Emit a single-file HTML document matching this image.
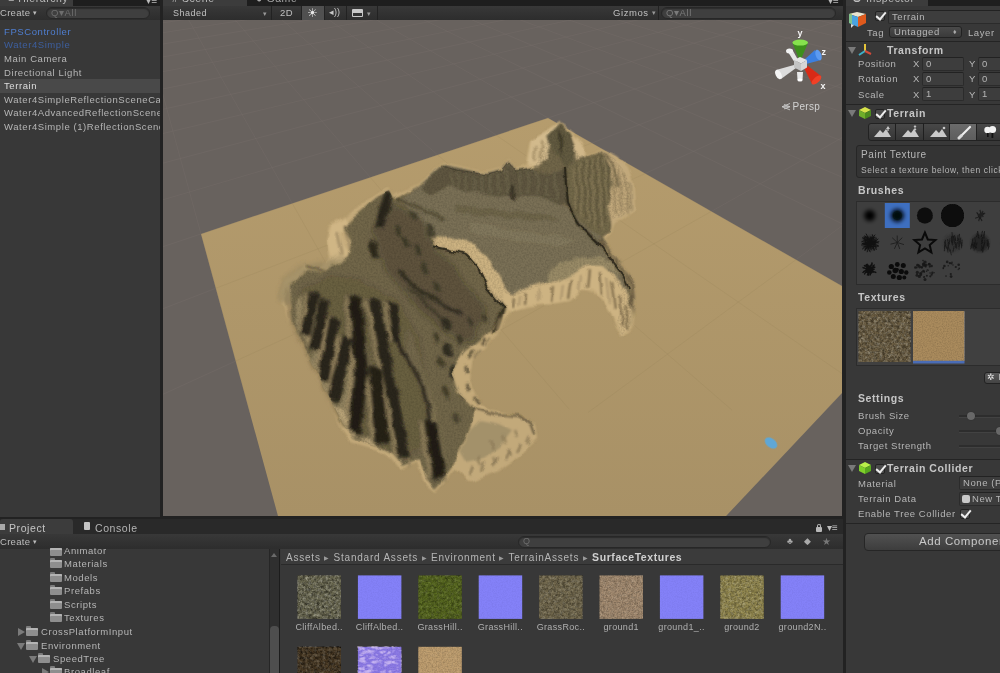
<!DOCTYPE html>
<html><head><meta charset="utf-8"><title>Unity</title>
<style>
*{box-sizing:border-box;margin:0;padding:0}
html,body{width:1000px;height:673px;overflow:hidden;background:#222}
body{position:relative;will-change:transform;filter:blur(.35px);font-family:"Liberation Sans",sans-serif;font-size:9.5px;color:#b6b6b6;letter-spacing:.58px;line-height:13px}
.abs{position:absolute}
.t{position:absolute;white-space:nowrap;line-height:13px}
.b{font-weight:bold;color:#c6c6c6;font-size:10.5px;letter-spacing:.58px}
.panel{position:absolute;background:#383838;overflow:hidden}
.tb{position:absolute;background:linear-gradient(#383838,#2d2d2d);}
.tab{position:absolute;background:#3c3c3c;border-radius:3px 3px 0 0}
.fld{position:absolute;background:#3d3d3d;border:1px solid #2b2b2b;border-top-color:#222;border-radius:2px;color:#b6b6b6;padding-left:3px;line-height:12px;overflow:hidden;white-space:nowrap}
.sep{position:absolute;height:1px;background:#242424;left:0;right:0}
.srch{position:absolute;background:#3f3f3f;border:1px solid #272727;border-radius:7px;box-shadow:inset 0 1px 1px #2c2c2c}
.chk{position:absolute;width:10px;height:10px;background:#4a4a4a;border:1px solid #222;border-radius:2px}
.chk:after{content:"";position:absolute;left:2px;top:-2px;width:4px;height:8px;border:solid #eee;border-width:0 2px 2px 0;transform:rotate(40deg)}
.fold{position:absolute;width:0;height:0;border-left:4px solid transparent;border-right:4px solid transparent;border-top:7px solid #7a7a7a}
.foldr{position:absolute;width:0;height:0;border-top:4px solid transparent;border-bottom:4px solid transparent;border-left:7px solid #7a7a7a}
.fi{position:absolute;width:12px;height:8px;background:#8e8e8e;border-radius:1px;box-shadow:inset 0 2px 0 #b4b4b4}
.fi:before{content:"";position:absolute;left:0;top:-2px;width:5px;height:2px;background:#7c7c7c;border-radius:1px 1px 0 0}
.th{position:absolute;width:44px;height:44px}
.lbl{position:absolute;width:60px;text-align:center;font-size:9px;letter-spacing:.35px;color:#b0b0b0;white-space:nowrap}
</style></head><body>
<!-- HIERARCHY -->
<div class="panel" style="left:0;top:0;width:160px;height:517px">
  <div class="abs" style="left:0;top:0;width:160px;height:6px;background:#1e1e1e"></div>
  <div class="tab" style="left:0;top:-10px;width:73px;height:16px"></div>
  <div class="t" style="left:8px;top:-8.5px;font-size:10.5px;color:#bdbdbd">≡ Hierarchy</div>
  <div class="t" style="left:146px;top:-6px;font-size:10px;color:#bbb">▾≡</div>
  <div class="tb" style="left:0;top:6px;width:160px;height:14px"></div>
  <div class="t" style="left:0;top:6px;font-size:9.5px;letter-spacing:.3px;color:#bdbdbd">Create <span style="font-size:7px;position:relative;top:-1px">▾</span></div>
  <div class="srch" style="left:46px;top:7px;width:104px;height:12px"></div>
  <div class="t" style="left:51px;top:6px;font-size:9.5px;color:#6e6e6e">Q▾All</div>
  <div class="abs" style="left:0;top:79px;width:160px;height:14px;background:#494949"></div>
  <div class="t" style="left:4px;top:25px;color:#4f7ed0">FPSController</div>
  <div class="t" style="left:4px;top:38px;color:#3d5f9f">Water4Simple</div>
  <div class="t" style="left:4px;top:52px">Main Camera</div>
  <div class="t" style="left:4px;top:66px">Directional Light</div>
  <div class="t" style="left:4px;top:79px;color:#dedede">Terrain</div>
  <div class="t" style="left:4px;top:93px">Water4SimpleReflectionSceneCamera</div>
  <div class="t" style="left:4px;top:106px">Water4AdvancedReflectionSceneCamera</div>
  <div class="t" style="left:4px;top:120px">Water4Simple (1)ReflectionSceneCamera</div>
</div>
<!-- SCENE -->
<div class="abs" style="left:163px;top:0;width:680px;height:6px;background:#1e1e1e"></div>
<div class="tab" style="left:163px;top:-10px;width:84px;height:16px"></div>
<div class="t" style="left:172px;top:-8.5px;font-size:10.5px;color:#bdbdbd"># Scene</div>
<div class="t" style="left:256px;top:-8.5px;font-size:10.5px;color:#a8a8a8">● Game</div>
<div class="tb" style="left:163px;top:6px;width:680px;height:14px"></div>
<div class="t" style="left:173px;top:6.5px;font-size:9px;letter-spacing:.5px;color:#c0c0c0">Shaded</div>
<div class="t" style="left:263px;top:7px;font-size:7px;color:#999">▾</div>
<div class="abs" style="left:271px;top:6px;width:1px;height:14px;background:#222"></div>
<div class="t" style="left:280px;top:6px;font-size:9.5px;color:#c0c0c0">2D</div>
<div class="abs" style="left:301px;top:6px;width:1px;height:14px;background:#222"></div>
<div class="abs" style="left:302px;top:6px;width:22px;height:14px;background:#505050"></div>
<div class="t" style="left:307px;top:6.5px;font-size:12px;color:#e8e8e8;letter-spacing:0">☀</div>
<div class="abs" style="left:324px;top:6px;width:1px;height:14px;background:#222"></div>
<div class="t" style="left:329px;top:6px;font-size:9px;color:#c8c8c8;letter-spacing:0">◂))</div>
<div class="abs" style="left:346px;top:6px;width:1px;height:14px;background:#222"></div>
<div class="abs" style="left:352px;top:9px;width:11px;height:8px;background:#c8c8c8;border-radius:1px"></div><div class="abs" style="left:353px;top:13px;width:9px;height:3px;background:#333"></div>
<div class="t" style="left:367px;top:7px;font-size:7px;color:#999">▾</div>
<div class="abs" style="left:377px;top:6px;width:1px;height:14px;background:#222"></div>
<div class="t" style="left:613px;top:6px;font-size:9.5px;color:#c0c0c0">Gizmos <span style="font-size:7px;position:relative;top:-1px;color:#999">▾</span></div>
<div class="abs" style="left:658px;top:6px;width:1px;height:14px;background:#222"></div>
<div class="srch" style="left:661px;top:7px;width:175px;height:12px"></div>
<div class="t" style="left:666px;top:6px;font-size:9.5px;color:#7a7a7a">Q▾All</div><div class="t" style="left:828px;top:-6px;font-size:10px;color:#bbb;letter-spacing:0">▾≡</div>
<svg class="abs" style="left:163px;top:20px" width="679" height="496" viewBox="163 20 679 496">
<rect x="163" y="20" width="679" height="496" fill="#68625e"/>
<path d="M100.5 -38.0L121.9 -40.0M100.6 -34.5L159.2 -40.0M100.6 -30.7L196.8 -40.0M100.7 -26.6L234.8 -40.0M100.7 -22.1L273.0 -40.0M100.8 -17.3L311.6 -40.0M100.8 -12.1L350.5 -40.0M100.9 -6.5L389.7 -40.0M101.0 -0.3L429.3 -40.0M101.1 6.6L469.2 -40.0M101.2 14.1L509.4 -40.0M101.3 22.5L550.0 -40.0M101.4 31.8L591.0 -40.0M101.5 42.2L632.3 -40.0M101.7 54.1L673.1 -39.9M101.8 67.6L715.2 -39.9M102.0 83.1L757.6 -39.9M102.2 101.2L800.4 -39.9M102.5 122.5L843.6 -39.9M102.8 147.9L887.2 -39.9M103.2 178.9L899.5 -31.5M103.6 217.3L899.4 -17.4M126.2 -39.9L249.8 412.7M104.2 266.3L899.3 0.6M154.9 -39.9L411.0 413.6M105.0 331.1L899.2 24.3M183.8 -40.0L569.2 409.2M114.1 416.7L899.1 57.2M213.0 -39.9L731.9 410.0M354.2 412.8L898.8 105.7M242.1 -40.0L888.6 405.7M588.2 412.4L898.4 184.4M271.8 -39.9L894.8 316.2M827.5 408.4L897.7 334.0M301.3 -39.9L899.3 251.7M331.0 -40.0L898.0 200.9M361.3 -39.9L896.9 161.5M391.4 -39.9L899.9 131.5M422.1 -39.8L898.8 105.7M452.6 -39.9L897.9 84.3M483.1 -40.0L897.2 66.2M514.6 -39.9L899.3 51.4M545.6 -39.9L898.6 38.0M577.5 -39.8L897.9 26.2M608.9 -39.9L899.6 16.3M640.4 -40.0L899.0 7.1M673.1 -39.9L898.4 -1.2M705.0 -39.9L899.8 -8.3M738.2 -39.8L899.3 -15.0M770.5 -39.9L898.8 -21.1M803.0 -40.0L900.0 -26.4M837.0 -39.9L899.5 -31.5M869.9 -39.9L899.1 -36.2" stroke="#7a726e" stroke-width="1" fill="none" opacity=".3"/>
<defs><linearGradient id="sg" gradientUnits="userSpaceOnUse" x1="0" y1="118" x2="0" y2="516"><stop offset="0" stop-color="#b59c6d"/><stop offset="1" stop-color="#a89166"/></linearGradient></defs><polygon points="548,118 907.6,323.5 378.6,884.4 201,234" fill="url(#sg)"/><clipPath id="sandclip"><polygon points="548,118 907.6,323.5 378.6,884.4 201,234"/></clipPath><path d="M100.5 -38.0L121.9 -40.0M100.6 -34.5L159.2 -40.0M100.6 -30.7L196.8 -40.0M100.7 -26.6L234.8 -40.0M100.7 -22.1L273.0 -40.0M100.8 -17.3L311.6 -40.0M100.8 -12.1L350.5 -40.0M100.9 -6.5L389.7 -40.0M101.0 -0.3L429.3 -40.0M101.1 6.6L469.2 -40.0M101.2 14.1L509.4 -40.0M101.3 22.5L550.0 -40.0M101.4 31.8L591.0 -40.0M101.5 42.2L632.3 -40.0M101.7 54.1L673.1 -39.9M101.8 67.6L715.2 -39.9M102.0 83.1L757.6 -39.9M102.2 101.2L800.4 -39.9M102.5 122.5L843.6 -39.9M102.8 147.9L887.2 -39.9M103.2 178.9L899.5 -31.5M103.6 217.3L899.4 -17.4M126.2 -39.9L249.8 412.7M104.2 266.3L899.3 0.6M154.9 -39.9L411.0 413.6M105.0 331.1L899.2 24.3M183.8 -40.0L569.2 409.2M114.1 416.7L899.1 57.2M213.0 -39.9L731.9 410.0M354.2 412.8L898.8 105.7M242.1 -40.0L888.6 405.7M588.2 412.4L898.4 184.4M271.8 -39.9L894.8 316.2M827.5 408.4L897.7 334.0M301.3 -39.9L899.3 251.7M331.0 -40.0L898.0 200.9M361.3 -39.9L896.9 161.5M391.4 -39.9L899.9 131.5M422.1 -39.8L898.8 105.7M452.6 -39.9L897.9 84.3M483.1 -40.0L897.2 66.2M514.6 -39.9L899.3 51.4M545.6 -39.9L898.6 38.0M577.5 -39.8L897.9 26.2M608.9 -39.9L899.6 16.3M640.4 -40.0L899.0 7.1M673.1 -39.9L898.4 -1.2M705.0 -39.9L899.8 -8.3M738.2 -39.8L899.3 -15.0M770.5 -39.9L898.8 -21.1M803.0 -40.0L900.0 -26.4M837.0 -39.9L899.5 -31.5M869.9 -39.9L899.1 -36.2" stroke="#8f7b55" stroke-width="1" fill="none" opacity=".17" clip-path="url(#sandclip)"/>
<defs>
<filter id="soft" x="-5%" y="-5%" width="110%" height="110%"><feGaussianBlur stdDeviation="1.1"/></filter>
<filter id="soft15" x="-5%" y="-5%" width="110%" height="110%"><feGaussianBlur stdDeviation="1.5"/></filter>
<filter id="soft2" x="-5%" y="-5%" width="110%" height="110%"><feGaussianBlur stdDeviation="2"/></filter>
<filter id="soft0" x="-5%" y="-5%" width="110%" height="110%"><feGaussianBlur stdDeviation="0.6"/></filter>
<filter id="noise" x="0" y="0" width="100%" height="100%"><feTurbulence type="fractalNoise" baseFrequency="0.55" numOctaves="2" seed="3"/><feColorMatrix type="matrix" values="0 0 0 0 0  0 0 0 0 0  0 0 0 0 0  1.6 0 0 0 -0.55"/></filter>
<clipPath id="olive"><path id="olivep" d="M290,300 290,284 308,270 322,272 341,262 348,256 352,240 344,228 350,220 364,208 377,197 389,191 393,199 399,197 420,185 443,165 468,170 485,174 502,170 509,161 516,171 533,168 538,160 546,140 560,123 570,135 576,150 584,157 601,151 615,159 624,170 630,186 632,208 621,217 612,219 610,230 602,236 606,247 622,268 632,282 633,300 630,326 622,335 617,322 624,296 606,266 591,265 578,270 561,282 537,287 513,297 503,292 504,309 492,330 464,352 451,371 458,393 476,410 470,430 460,450 453,466 443,480 435,489 426,478 419,459 402,465 394,454 380,447 354,439 343,424 333,404 319,376 306,350 293,323Z"/></clipPath>
<filter id="wobble" x="-2%" y="-2%" width="104%" height="104%"><feTurbulence type="fractalNoise" baseFrequency="0.07" numOctaves="2" seed="8" result="t"/><feDisplacementMap in="SourceGraphic" in2="t" scale="6" xChannelSelector="R" yChannelSelector="G"/></filter>
</defs>
<g filter="url(#wobble)">
<!-- skirt silhouette -->
<g filter="url(#soft)">
<path d="M282,302 284,281 297,271 307,265 320,268 329,258 326,240 329,226 345,217 362,204 378,193 388,188 393,196 420,183 443,163 468,168 485,172 502,168 509,159 516,169 526,165 527,156 530,142 546,131 560,121 572,133 584,145 586,155 601,149 616,156 627,167 633,185 635,209 623,220 614,222 612,232 604,238 608,247 623,267 633,281 635,296 632,329 622,337 616,327 611,309 600,296 578,288 550,303 513,310 504,320 498,336 473,359 469,379 480,403 490,410 517,415 535,424 537,438 524,449 511,462 490,472 469,481 455,469 444,482 435,492 423,482 416,462 400,469 391,458 377,450 351,442 341,428 331,407 317,380 304,353 290,325Z" fill="#c4aa7a"/>
<!-- left skirt shadow banding -->
<path d="M284,300 287,284 292,300 300,330 312,356 326,384 338,408 347,424 343,428 331,407 317,380 304,353 290,325Z" fill="#a28b62"/>
<path d="M330,258 327,240 331,227 345,219 349,224 341,233 344,246 352,256 340,262Z" fill="#d0b685"/>
<path d="M336,232l3,0 5,22 -3,2zM343,226l3,-1 6,22 -3,2z" fill="#a8926a"/>
</g>
<path d="M280,300 282,280 300,266 322,262 342,256 350,262 330,272 306,274 292,288 290,306Z" fill="#8c7f5c" opacity=".55" filter="url(#soft2)"/>
<!-- olive body -->
<g filter="url(#soft)">
<use href="#olivep" fill="#716648"/>
<!-- plateau lighter -->
<path d="M443,165 468,170 485,174 502,170 509,161 516,171 533,168 545,180 560,200 575,215 598,232 606,247 622,268 632,282 624,296 606,266 591,265 578,270 561,282 537,287 513,297 503,292 490,274 480,260 466,245 448,238 434,242 428,228 412,212 400,200 420,185Z" fill="#7a7056"/>
</g>
<!-- details -->
<g filter="url(#soft)">
<!-- plateau back face (darker striated band under ridge) -->
<path d="M443,166 468,171 485,175 502,171 509,162 516,172 533,169 548,176 566,168 568,200 560,205 540,196 520,196 500,197 480,194 462,190 448,186 432,196 420,188Z" fill="#5f5740"/>
<path d="M450,172l2,14M458,172l1,16M466,174l1,16M474,176l0,16M482,177l0,16M490,176l0,18M498,174l1,20M506,168l1,26M520,174l1,20M528,172l1,22M537,172l2,22M546,178l2,18M555,174l2,26" stroke="#7d7459" stroke-width="1.6" fill="none" opacity=".6"/>
<path d="M510,184l4,2 1,16 -4,-3z" fill="#3a3526"/>
<!-- faded light area of plateau near rim -->
<path d="M560,262 578,258 600,256 612,262 620,276 606,268 591,266 578,271 561,283 545,286 548,272Z" fill="#988a66"/>
<path d="M470,222 510,230 560,236 575,242 560,246 510,240 470,232Z" fill="#857b5e" opacity=".8"/>
<path d="M455,204 500,210 545,214 560,220 545,222 500,218 455,212Z" fill="#6a6249" opacity=".8"/>
<!-- mountain: light left skirt -->
<path d="M527,166 529,153 531,140 545,132 560,122 556,135 549,146 545,160 538,166Z" fill="#d2ba8c"/>
<path d="M534,146l3,0 -1,16 -3,0zM541,140l3,0 -2,20 -3,0z" fill="#ab956c"/>
<!-- mountain peak 1 olive -->
<path d="M547,136 560,123 571,136 577,150 572,162 566,168 559,158 552,148Z" fill="#625a40"/>
<path d="M559,128l3,8 0,22 -3,-10z" fill="#3e3828"/>
<!-- light face right of peak1 -->
<path d="M571,134 584,146 585,156 577,160 576,148Z" fill="#d0b789"/>
<!-- mountain south face striated -->
<path d="M566,168 577,160 590,156 602,151 614,160 622,172 624,190 620,214 612,220 610,231 600,234 588,228 578,218 569,202Z" fill="#72674a"/>
<path d="M574,168l2,40M580,164l2,52M586,160l3,62M592,158l3,68M598,156l4,72M604,156l4,66M610,160l3,56M616,166l2,46" stroke="#8f815c" stroke-width="2" fill="none" opacity=".7"/>
<path d="M577,166l2,46M583,162l3,56M589,160l3,64M595,158l4,70M601,154l4,70M607,158l3,60M613,162l3,52" stroke="#4a422c" stroke-width="1.400" fill="none" opacity=".6"/>
<!-- mountain right light face -->
<path d="M602,151 617,158 628,168 633,184 634,210 616,221 612,227 608,205 613,186 610,166Z" fill="#c2a97c"/>
<path d="M614,170l2,44M619,170l3,44M625,174l3,40M630,182l1,28" stroke="#8c7a56" stroke-width="1.800" fill="none" opacity=".8"/><path d="M604,153 612,162 616,176 617,186" stroke="#6a5f43" stroke-width="3" fill="none" opacity=".7"/>
<!-- crack along mountain/plateau -->
<path d="M565,167 567,200 578,223 599,244 611,259 622,273 629,289" stroke="#2f2a1d" stroke-width="2.200" fill="none"/>
<!-- east cliff face -->
<path d="M599,236 608,247 623,267 633,281 635,296 633,318 629,292 622,276 611,261 600,247Z" fill="#6f6144"/>
<path d="M606,248l2,8M612,254l3,10M618,262l3,10M624,270l3,12M629,280l2,14" stroke="#9f8b64" stroke-width="1.500" fill="none"/>
<!-- bay cliff face (light) -->
<path d="M432,236 451,237 471,242 485,254 495,270 505,286 511,296 521,289 540,283 558,281 576,273 586,266 602,266 616,277 627,293 632,312 630,328 622,337 613,317 604,298 592,289 581,291 570,301 551,304 528,305 510,312 505,309 487,288 478,270 466,256 434,249Z" fill="#cdb382"/>
<!-- crack below rim -->
<path d="M434,248 466,255 478,268 487,287 505,309" stroke="#2c281c" stroke-width="1.600" fill="none"/>
<!-- cliff stripes -->
<path d="M514,298l-1,10M526,292l-1,12M553,286l-2,16M571,279l-3,20M589,270l-2,18M600,272l2,22M612,282l4,26M620,296l3,30M627,306l0,24" stroke="#7d6b4a" stroke-width="2.400" fill="none"/>
<path d="M520,295l-1,10M540,288l-1,14M563,284l-2,16M581,275l-2,16M607,278l3,24" stroke="#a8926a" stroke-width="2" fill="none"/>
</g>
<!-- left arm ridges -->
<g filter="url(#soft15)" clip-path="url(#olive)">
<!-- lighter tan ridges between dark stripes -->
<path d="M296,300 303,296 300,320 297,334Z M318,304 314,330 308,346 304,338 310,318Z M328,322 322,352 316,374 311,360 318,336Z M340,338 334,370 326,396 320,382 328,356Z M352,352 346,384 338,410 344,426 350,408 354,380Z" fill="#a8966e" opacity=".8"/>
<path d="M366,340 372,372 376,410 378,440 370,438 368,408 364,372Z" fill="#877a59" opacity=".7"/>
<path d="M408,330 420,360 432,396 440,430 446,462 436,440 428,408 418,380 408,356Z" fill="#837655" opacity=".7"/>
<path d="M332,404 340,418 348,432 356,440 350,426 344,410Z M356,436 366,444 378,448 372,440Z M410,462 418,470 424,482 428,476Z" fill="#cbb384" opacity=".9"/>
<path d="M372,230 392,205 420,215 436,250 452,262 470,290 488,310 470,345 440,330 410,300 385,270Z" fill="#2e2a1c" opacity=".28" filter="url(#soft2)"/>
<path d="M300,290 330,275 360,280 400,300 420,340 430,400 425,450 400,455 360,440 330,400 305,345Z" fill="#2e2a1c" opacity=".12" filter="url(#soft2)"/>
<!-- sunlit edges -->
<g fill="none" stroke="#a38f67" stroke-width="3" stroke-linecap="round" opacity=".75">
<path d="M307,296 300,330"/><path d="M317,300 307,345"/><path d="M327,318 316,376"/><path d="M340,338 326,396"/><path d="M347,298 352,372 346,428"/><path d="M367,370 373,438"/><path d="M367,301 379,368 396,454"/><path d="M385,304 390,338"/><path d="M421,422 430,474"/>
</g>
<!-- dark stripes -->
<g fill="#2a261b" stroke="#2a261b" stroke-width="2.600" stroke-linejoin="round">
<path d="M311,294 318,295.600 309.300,335 302.500,333Z"/>
<path d="M321.300,299 328.800,302.500 317.900,350.300 310.300,347Z"/>
<path d="M330.900,317.900 338.400,321.300 328,381 318.500,378.700Z"/>
<path d="M343.500,336.700 351.400,340 338.400,401.600 328.800,398.200Z"/>
<path d="M350.300,295.600 360.600,299 367.400,372.600 359.600,432.400 349.300,430.700 356,372.600Z" fill="#241f16"/>
<path d="M369.800,367.400 380,370.900 388,442.600 376.700,441Z" fill="#262218"/>
<path d="M370.900,299 379.400,302.500 391.400,365.700 408.500,456.300 400,456.300 382.800,367.400Z"/>
<path d="M388,302.500 395.800,304.200 399.200,340 393,340Z"/>
<path d="M425.600,420.400 435.800,423.800 444.400,475 434,478.500Z" fill="#221e15"/>
</g>
<g fill="none" stroke-linecap="round" stroke-linejoin="round">
<path d="M396.500,340 410,362 422,384.500 427,404 430.700,423.800" stroke="#28241a" stroke-width="3.400"/>
<path d="M403,277 416,288 431,297 446,306 461,314" stroke="#26231a" stroke-width="2.600"/>
<path d="M400,272 418,290 436,300" stroke="#322d20" stroke-width="4.500" stroke-dasharray="5 4"/>
<path d="M410,290 424,300 440,318 446,330" stroke="#3a3526" stroke-width="2.400"/>
</g>
<g fill="#332e20">
<ellipse cx="446" cy="325" rx="4" ry="7" transform="rotate(-15 446 325)"/>
<ellipse cx="448" cy="349" rx="4.500" ry="8" transform="rotate(-10 448 349)"/>
<ellipse cx="454" cy="373" rx="5" ry="8" transform="rotate(-25 454 373)"/>
<ellipse cx="465" cy="393" rx="5" ry="7" transform="rotate(-40 465 393)"/>
<ellipse cx="478" cy="406" rx="5" ry="4" transform="rotate(-30 478 406)"/>
<ellipse cx="460" cy="340" rx="3" ry="6" transform="rotate(-20 460 340)" opacity=".8"/>
<ellipse cx="436" cy="338" rx="3" ry="6" transform="rotate(-20 436 338)" opacity=".7"/><ellipse cx="440" cy="362" rx="3.500" ry="6" transform="rotate(-20 440 362)" opacity=".7"/><ellipse cx="446" cy="392" rx="3.500" ry="7" transform="rotate(-25 446 392)" opacity=".7"/><ellipse cx="456" cy="418" rx="4" ry="6" transform="rotate(-30 456 418)" opacity=".6"/><ellipse cx="470" cy="322" rx="3" ry="5" transform="rotate(-30 470 322)" opacity=".7"/><ellipse cx="484" cy="318" rx="3" ry="5" transform="rotate(-30 484 318)" opacity=".6"/>
</g>
<!-- upper lobe dark stripe -->
<path d="M385,191 392,194 389,210 383,228 375,228 379,210Z" fill="#2a261b"/>
<path d="M368,240 376,243 380,258 372,258Z" fill="#2e2a1d"/>
<!-- small dark bumps -->
<path d="M394,225l6,2 3,10 -6,-2zM402,236l6,2 3,10 -6,-2zM414,244l6,2 3,11 -6,-2zM426,222l7,2 3,15 -7,-3zM420,262l6,3 3,11 -6,-3zM432,280l6,3 2,10 -6,-3zM410,210l5,2 2,8 -5,-2z" fill="#3a3524" opacity=".85"/>
<path d="M396,199 420,208 444,220" stroke="#38331f" stroke-width="1.500" fill="none"/>
<!-- right cliff top of left arm -->
<path d="M503,306 506,312 498,334 493,330Z" fill="#2b271b"/>
</g>
<!-- cracks (crisper) -->
<g filter="url(#soft0)" fill="none" stroke="#2a261b" stroke-linejoin="round" opacity=".85">
<path d="M433,247.500 450,251 466,255 472,261 478,268 483,278 487,288 496,299 505,309" stroke-width="1.800"/>
<path d="M565,167 566,186 568,201 573,214 579,224 589,235 600,245 611,259 622,273 629,289" stroke-width="1.800"/>
<path d="M441,166 455,170 470,172 486,175 502,171 509,162 516,172 533,169" stroke-width="1" opacity=".45"/>
<path d="M160,100" />
</g>
<!-- foot (light) -->
<g filter="url(#soft)">
<path d="M476,409 495,414 520,416 531,423 535,434 524,452 499,471 470,481 455,468 460,450 470,430Z" fill="#c2a97a"/>
<path d="M470,430 480,420 500,424 512,430 500,446 484,458 466,462 460,452Z" fill="#8e8260" opacity=".6"/>
<path d="M476,409 495,414.500 520,416 530.500,424 534,434" stroke="#2a261b" stroke-width="1.700" fill="none"/>
<path d="M490,440l3,9M503,434l3,9M515,430l3,8M478,456l3,9M494,456l3,8M508,448l3,8" stroke="#8c7b58" stroke-width="2.600" fill="none" opacity=".8"/>
<!-- arm right skirt blotches -->
<path d="M503,309l-5,14 -4,10" stroke="#3a3424" stroke-width="4" fill="none"/>
<path d="M486,338l-5,6M474,350l-6,8M466,366l1,8M466,384l4,8M474,398l5,6" stroke="#5a5038" stroke-width="3.500" fill="none" opacity=".85"/>
</g>
<!-- foot skirt stripes (outside olive) -->
<g filter="url(#soft)">
<path d="M470,474l3,-8M482,470l3,-8M494,466l4,-9M506,460l4,-9M517,452l4,-8M527,444l3,-7" stroke="#8a7856" stroke-width="2.200" fill="none"/>
<path d="M444,482l2,-7M428,480l-2,-9M410,466l-2,-8M396,456l-2,-7" stroke="#8f7d5a" stroke-width="2" fill="none"/>
<path d="M500,318l-3,12M492,338l-8,8M480,350l-6,8" stroke="#8a7856" stroke-width="2.200" fill="none"/>
<path d="M307,266l16,5" stroke="#2b271b" stroke-width="1.200" fill="none"/>
</g>
</g>
<!-- noise texture -->
<rect x="280" y="118" width="360" height="380" filter="url(#noise)" clip-path="url(#olive)" opacity=".16"/>
<!-- brush marker -->
<ellipse cx="771" cy="443" rx="7" ry="4.500" transform="rotate(38 771 443)" fill="#5ea7d6" filter="url(#soft0)"/>
<!-- gizmo -->
<g filter="url(#soft0)">
<polygon points="788,52 792,49 798,60 795,63" fill="#e6e6e6"/>
<ellipse cx="789.500" cy="51" rx="3.500" ry="2.500" fill="#f2f2f2"/>
<polygon points="776,70 781,79 796,68 794,65" fill="#dcdcdc"/>
<ellipse cx="778.500" cy="74.500" rx="2.800" ry="5" transform="rotate(-25 778.500 74.500)" fill="#f4f4f4"/>
<polygon points="797,72 803,72 802.500,80 797.500,80" fill="#e9e9e9"/>
<ellipse cx="800" cy="80" rx="2.600" ry="1.600" fill="#fff"/>
<polygon points="792.500,43 808,43 801.500,58 798.500,58" fill="#3c8f1f"/>
<ellipse cx="800.200" cy="42.600" rx="7.800" ry="3" fill="#86e24e"/>
<polygon points="804,60 815,50 821,60 806,64" fill="#3b7fe0"/>
<ellipse cx="818.500" cy="55" rx="2.800" ry="5.500" transform="rotate(-20 818.500 55)" fill="#5b9af0"/>
<polygon points="804,68 808,66 821,76 812,84" fill="#d92c17"/>
<ellipse cx="816.500" cy="80" rx="6" ry="2.800" transform="rotate(-42 816.500 80)" fill="#f04028"/>
<polygon points="794,60 800,57 807,60 801,63.500" fill="#e4e4e4"/>
<polygon points="794,60 801,63.500 801,71 794,67.500" fill="#c4c4c4"/>
<polygon points="801,63.500 807,60 807,67.500 801,71" fill="#d6d6d6"/>
</g>
<g font-family="Liberation Sans" font-weight="bold" fill="#f4f4f4" font-size="9">
<text x="797.500" y="35.500">y</text><text x="821.500" y="54.500">z</text><text x="820.500" y="89">x</text></g>
<path d="M790,103.500l-8,3.200 8,3.200M782,106.700h8M784,104.500l6,2.200M784,108.900l6,-2.200" stroke="#c8c8c8" stroke-width=".9" fill="none"/>
<text x="792.500" y="110" font-family="Liberation Sans" font-size="10" fill="#d2d2d2" letter-spacing=".3">Persp</text>

</svg>
<!-- INSPECTOR -->
<div class="panel" style="left:846px;top:0;width:154px;height:673px">
  <div class="abs" style="left:0;top:0;width:154px;height:6px;background:#1e1e1e"></div>
  <div class="tab" style="left:0;top:-10px;width:82px;height:16px"></div>
  <div class="t" style="left:6px;top:-8.5px;font-size:10.5px;color:#bdbdbd">❶ Inspector</div>
  <!-- object header -->
  <svg class="abs" style="left:2px;top:10px" width="19" height="19" viewBox="0 0 19 19">
    <polygon points="1,4 9,2 18,4 10,7" fill="#e9e4cf"/>
    <polygon points="1,4 10,7 10,17 1,13" fill="#4aa3e0"/>
    <polygon points="10,7 18,4 18,13 10,17" fill="#e05a1c"/>
    <polygon points="1,4 4,3.4 4,14 1,13" fill="#9ad06a" opacity=".7"/>
    <polygon points="3,14 6,15 3,18" fill="#ddd"/>
  </svg>
  <div class="chk" style="left:29px;top:11px"></div>
  <div class="fld" style="left:42px;top:10px;width:120px;height:14px;line-height:12px">Terrain</div>
  <div class="t" style="left:21px;top:26px">Tag</div>
  <div class="abs" style="left:43px;top:26px;width:73px;height:12px;background:linear-gradient(#4a4a4a,#3a3a3a);border:1px solid #222;border-radius:3px"></div>
  <div class="t" style="left:48px;top:26px;font-size:9.5px;line-height:12px">Untagged</div>
  <div class="t" style="left:107px;top:26px;font-size:7px;line-height:12px;color:#aaa">♦</div>
  <div class="t" style="left:122px;top:26px">Layer</div>
  <div class="sep" style="top:41px"></div>
  <!-- transform -->
  <div class="fold" style="left:2px;top:47px"></div>
  <svg class="abs" style="left:12px;top:43px" width="14" height="14" viewBox="0 0 14 14"><path d="M7 8V1" stroke="#e4c43a" stroke-width="2"/><path d="M7 8L1 12" stroke="#3bb0c9" stroke-width="2"/><path d="M7 8L13 11" stroke="#d14a3a" stroke-width="2"/></svg>
  <div class="t b" style="left:41px;top:44px">Transform</div>
  <div class="t" style="left:12px;top:57px">Position</div><div class="t" style="left:67px;top:57px">X</div><div class="fld" style="left:76px;top:57px;width:42px;height:14px">0</div><div class="t" style="left:123px;top:57px">Y</div><div class="fld" style="left:132px;top:57px;width:42px;height:14px">0</div>
  <div class="t" style="left:12px;top:72px">Rotation</div><div class="t" style="left:67px;top:72px">X</div><div class="fld" style="left:76px;top:72px;width:42px;height:14px">0</div><div class="t" style="left:123px;top:72px">Y</div><div class="fld" style="left:132px;top:72px;width:42px;height:14px">0</div>
  <div class="t" style="left:12px;top:88px">Scale</div><div class="t" style="left:67px;top:88px">X</div><div class="fld" style="left:76px;top:87px;width:42px;height:14px">1</div><div class="t" style="left:123px;top:88px">Y</div><div class="fld" style="left:132px;top:87px;width:42px;height:14px">1</div>
  <div class="sep" style="top:104px"></div>
  <!-- terrain comp -->
  <div class="fold" style="left:2px;top:110px"></div>
  <svg class="abs" style="left:12px;top:106px" width="14" height="14" viewBox="0 0 14 14"><polygon points="1,4 7,1 13,4 7,7" fill="#d6e24a"/><polygon points="1,4 7,7 7,13 1,10" fill="#6fae2a"/><polygon points="7,7 13,4 13,10 7,13" fill="#4c8a1e"/></svg>
  <div class="chk" style="left:29px;top:109px"></div>
  <div class="t b" style="left:41px;top:107px">Terrain</div>
  <div class="abs" style="left:22px;top:122.5px;width:140px;height:18px;background:linear-gradient(#484848,#353535);border:1px solid #222;border-radius:3px 0 0 3px"></div>
  <div class="abs" style="left:102.5px;top:122.5px;width:28.5px;height:18px;background:linear-gradient(#6b6b6b,#5d5d5d);border:1px solid #222"></div>
  <div class="abs" style="left:49px;top:123px;width:1px;height:17px;background:#1f1f1f"></div>
  <div class="abs" style="left:77px;top:123px;width:1px;height:17px;background:#1f1f1f"></div>
  <svg class="abs" style="left:22px;top:123px" width="132" height="17" viewBox="0 0 132 17">
    <g fill="#c9c9c9"><path d="M6 14l6-7 3 3 3-4 5 8z"/><path d="M20 3l2 3h-1.4v2h-1.200v-2H18z"/>
    <path d="M34 14l6-7 3 3 3-4 5 8z"/><path d="M47 2l1.500 2h-1v2h1l-1.500 2-1.500-2h1v-2h-1z"/>
    <path d="M62 14l6-7 3 3 3-4 5 8z"/><circle cx="76" cy="5" r="1.300"/></g>
    <path d="M102 4L93 13" stroke="#f0f0f0" stroke-width="2.200" stroke-linecap="round"/><path d="M93.500 12.500L91 15" stroke="#ddd" stroke-width="3" stroke-linecap="round"/>
    <circle cx="119.500" cy="7" r="3.200" fill="#f2f2f2"/><circle cx="124.500" cy="6.500" r="3.600" fill="#f2f2f2"/><rect x="119" y="10" width="1.600" height="4" fill="#111"/><rect x="123.500" y="10" width="1.800" height="5" fill="#111"/>
  </svg>
  <div class="abs" style="left:10px;top:145px;width:150px;height:33px;background:#343434;border:1px solid #262626;border-radius:3px"></div>
  <div class="t" style="left:15px;top:148px;font-size:10px">Paint Texture</div>
  <div class="t" style="left:15px;top:164px;font-size:8.500px;letter-spacing:.55px">Select a texture below, then click to paint</div>
  <div class="t b" style="left:12px;top:184px">Brushes</div>
  <div class="abs" style="left:10px;top:201px;width:150px;height:84px;background:#3e3e3e;border:1px solid #2c2c2c"></div>
  <svg class="abs" style="left:0;top:195px" width="154" height="95" viewBox="0 195 154 95">
<defs><filter id="bb" x="-100%" y="-100%" width="300%" height="300%"><feGaussianBlur stdDeviation="2.2"/></filter><filter id="b1"><feGaussianBlur stdDeviation="0.5"/></filter><filter id="b2"><feGaussianBlur stdDeviation="0.9"/></filter></defs>
<rect x="38.8" y="203" width="25" height="25" fill="#3e6fc0"/>
<circle cx="23.7" cy="215.5" r="5.5" fill="#000" filter="url(#bb)"/>
<circle cx="51.3" cy="215.5" r="6.5" fill="#05070c" filter="url(#bb)"/><circle cx="51.3" cy="215.5" r="4" fill="#05070c" filter="url(#b2)"/>
<circle cx="78.9" cy="215.5" r="8" fill="#0c0c0c" filter="url(#b1)"/>
<circle cx="106.5" cy="215.5" r="11.5" fill="#080808" filter="url(#b1)"/>
<path d="M130.7 212.2L136.1 220.9M133.7 209.9L137.2 216.9M138.1 214.0L132.4 215.0M131.8 216.0L137.9 214.5M136.3 215.7L129.2 218.2M134.3 213.5L133.1 217.1M132.8 214.3L139.1 213.4M134.7 217.7L137.0 211.0M132.7 221.1L134.9 211.1" stroke="#1a1a1a" stroke-width="1.1" fill="none" opacity="0.9" filter="url(#b1)"/>
<path d="M164.3 221.0L162.4 209.7M164.8 213.9L161.8 217.3M163.6 216.7L158.9 214.0M167.2 215.6L160.3 216.7M164.2 212.3L163.0 219.0M162.3 214.1L162.0 216.6M162.7 210.2L167.2 217.7M160.0 218.5L162.2 214.2M165.1 220.7L158.2 213.7" stroke="#1a1a1a" stroke-width="1.1" fill="none" opacity="0.9" filter="url(#b1)"/>
<circle cx="23.7" cy="243.0" r="7" fill="#1c1c1c" filter="url(#b2)" opacity=".8"/>
<path d="M32.3 238.9L20.7 246.8M15.6 241.7L29.4 237.4M26.3 234.5L30.4 249.9M27.7 245.6L16.3 237.3M18.7 250.9L25.9 239.1M22.3 246.1L22.0 240.3M20.0 233.7L25.9 243.9M29.9 242.5L20.1 244.6M16.5 238.2L28.7 244.9M32.5 246.2L19.3 246.9M25.3 240.4L16.3 249.1M18.0 236.9L29.1 242.4M28.9 250.1L18.5 240.9M32.5 243.0L19.8 238.9M15.9 243.6L27.9 241.9M21.1 244.8L29.1 234.7M30.5 241.2L19.4 244.8M27.2 245.2L18.7 235.6M18.4 249.3L30.5 239.6M19.5 236.1L29.9 247.4M22.6 248.8L27.9 236.8M21.1 252.2L26.5 237.0M30.1 243.5L17.5 247.0M15.4 245.0L32.1 242.3M19.6 248.8L30.7 238.0M18.6 250.1L30.8 240.5M33.2 241.6L17.7 244.6M28.1 250.5L24.9 237.3M20.9 235.8L23.9 246.4M25.0 236.5L21.7 248.0M17.9 237.2L28.5 249.1M26.9 243.6L16.5 243.6M25.1 250.3L23.5 240.7M20.0 243.7L24.8 240.1M22.3 246.1L23.0 240.8M18.8 244.1L30.4 242.1M24.4 252.2L18.8 241.2M22.8 248.2L17.9 236.6M22.1 244.6L25.8 241.2M19.2 241.7L32.9 245.9" stroke="#0e0e0e" stroke-width="1.0" fill="none" opacity="0.85" filter="url(#b1)"/>
<path d="M51.3 242.5L58.0 244.6M51.3 242.5L53.8 249.0M51.3 242.5L48.4 248.9M51.3 242.5L44.5 244.2M51.3 242.5L46.2 237.7M51.3 242.5L51.2 235.5M51.3 242.5L56.3 237.6" stroke="#1e1e1e" stroke-width=".9" fill="none"/>
<polygon points="78.9,232.5 81.8,239.5 89.4,240.1 83.7,245.0 85.4,252.4 78.9,248.5 72.4,252.4 74.1,245.0 68.4,240.1 76.0,239.5" fill="none" stroke="#0a0a0a" stroke-width="2" stroke-linejoin="miter"/>
<circle cx="106.5" cy="243.0" r="9.0" fill="#2a2a2a" opacity="0.55" filter="url(#b2)"/><path d="M112.9 238.4l0.9 6.0M109.3 237.4l-1.1 6.0M108.4 241.3l1.4 6.0M115.9 242.2l-0.4 6.0M98.7 241.3l0.3 6.0M99.3 242.6l1.2 6.0M104.0 238.6l-0.8 6.0M104.1 249.2l1.2 6.0M108.4 235.2l1.4 6.0M106.4 238.3l-0.5 6.0M116.2 239.8l-0.6 6.0M106.0 232.4l0.4 6.0M105.4 235.9l0.8 6.0M107.2 235.5l1.3 6.0M112.1 234.9l-0.7 6.0M102.4 242.2l-0.1 6.0M109.4 242.1l0.7 6.0M98.9 245.2l-0.6 6.0M107.2 236.7l-0.6 6.0M107.1 239.3l-0.4 6.0M111.4 241.8l-1.4 6.0M101.5 239.1l1.2 6.0M114.3 240.9l-1.5 6.0M112.1 238.6l0.2 6.0M110.7 242.6l-0.1 6.0M114.7 237.7l-0.3 6.0M113.5 233.9l-0.6 6.0M113.2 243.9l-0.2 6.0M102.2 245.6l1.2 6.0M99.4 239.6l0.1 6.0M106.5 236.6l-1.0 6.0M108.2 246.2l-1.3 6.0M101.1 246.4l0.9 6.0" stroke="#141414" stroke-width=".9" opacity=".8" fill="none" filter="url(#b1)"/>
<circle cx="134.1" cy="243.0" r="9.0" fill="#1e1e1e" opacity="0.75" filter="url(#b2)"/><path d="M128.5 242.9l1.4 6.0M138.3 232.7l-0.6 6.0M136.3 238.3l-1.0 6.0M136.5 230.9l-1.2 6.0M131.7 231.4l-1.3 6.0M135.6 244.8l1.1 6.0M126.8 238.6l-0.6 6.0M136.1 239.8l1.3 6.0M131.6 231.1l0.6 6.0M127.1 242.6l0.0 6.0M142.3 241.1l0.4 6.0M129.4 241.0l-0.7 6.0M139.1 240.3l-1.1 6.0M128.8 237.4l0.7 6.0M127.7 244.3l0.5 6.0M125.8 243.4l-1.2 6.0M126.6 241.9l-0.8 6.0M141.6 239.6l-0.5 6.0M138.6 231.1l-1.0 6.0M143.1 243.6l-0.8 6.0M137.4 246.4l-1.1 6.0M136.6 237.1l-0.8 6.0M130.8 242.3l-0.5 6.0M131.8 232.7l1.0 6.0M137.1 246.1l-0.2 6.0M141.1 240.3l0.3 6.0M135.6 244.8l-0.3 6.0M141.9 239.6l0.8 6.0" stroke="#141414" stroke-width=".9" opacity=".8" fill="none" filter="url(#b1)"/>
<circle cx="164.7" cy="243.0" r="9" fill="#0e0e0e" filter="url(#b2)"/>
<path d="M28.0 265.9L21.1 273.3M25.8 271.0L19.8 270.3M18.3 274.3L23.7 266.3M23.2 272.1L22.5 266.6M21.9 269.7L27.0 271.7M29.3 267.2L19.2 270.3M25.9 268.7L20.3 270.0M20.8 263.9L26.5 270.3M26.7 270.0L20.9 272.6M27.6 268.9L20.1 272.4M22.4 275.7L25.0 267.2M24.1 275.4L27.3 265.0M16.6 272.8L23.7 267.5M24.5 265.3L27.6 272.8M28.6 269.2L21.8 270.6M30.3 272.7L16.4 267.3M26.7 270.5L20.5 272.2M26.7 270.7L20.1 269.3M25.4 270.1L22.5 267.0M19.5 269.3L25.8 269.4M22.8 271.6L26.2 262.4M17.9 265.4L25.4 269.3M19.1 268.3L27.6 270.5M19.3 265.1L24.1 273.1M17.2 271.7L24.9 267.5M22.9 271.5L28.6 264.7M22.8 271.7L22.0 266.9M27.4 271.7L21.0 267.9M29.3 271.8L21.4 271.3M22.8 273.4L20.9 266.3M21.2 275.4L26.4 262.7M20.0 264.2L26.2 273.2M26.1 264.2L17.9 271.8M22.7 266.3L23.0 273.5" stroke="#0c0c0c" stroke-width="1.3" fill="none" opacity="0.95" filter="url(#b1)"/>
<circle cx="45.3" cy="266.5" r="2.6" fill="#0b0b0b"/>
<circle cx="51.3" cy="264.5" r="2.4" fill="#0b0b0b"/>
<circle cx="57.3" cy="265.5" r="2.5" fill="#0b0b0b"/>
<circle cx="43.3" cy="272.5" r="2.3" fill="#0b0b0b"/>
<circle cx="49.3" cy="270.5" r="2.8" fill="#0b0b0b"/>
<circle cx="55.3" cy="271.5" r="2.6" fill="#0b0b0b"/>
<circle cx="60.3" cy="272.5" r="2.2" fill="#0b0b0b"/>
<circle cx="47.3" cy="276.5" r="2.5" fill="#0b0b0b"/>
<circle cx="53.3" cy="277.5" r="2.6" fill="#0b0b0b"/>
<circle cx="58.3" cy="277.5" r="2.0" fill="#0b0b0b"/>
<circle cx="51.3" cy="269.5" r="1.6" fill="#0b0b0b"/>
<circle cx="80.6" cy="271.3" r="0.8" fill="#161616" opacity=".85"/>
<circle cx="78.3" cy="276.9" r="0.9" fill="#161616" opacity=".85"/>
<circle cx="86.4" cy="272.7" r="1.2" fill="#161616" opacity=".85"/>
<circle cx="81.3" cy="269.9" r="0.7" fill="#161616" opacity=".85"/>
<circle cx="73.4" cy="276.4" r="1.6" fill="#161616" opacity=".85"/>
<circle cx="76.0" cy="267.0" r="1.1" fill="#161616" opacity=".85"/>
<circle cx="75.9" cy="273.0" r="0.6" fill="#161616" opacity=".85"/>
<circle cx="71.5" cy="265.2" r="1.4" fill="#161616" opacity=".85"/>
<circle cx="84.1" cy="273.0" r="0.8" fill="#161616" opacity=".85"/>
<circle cx="77.5" cy="264.1" r="1.6" fill="#161616" opacity=".85"/>
<circle cx="79.7" cy="266.7" r="0.9" fill="#161616" opacity=".85"/>
<circle cx="83.8" cy="266.6" r="1.1" fill="#161616" opacity=".85"/>
<circle cx="71.3" cy="272.4" r="1.6" fill="#161616" opacity=".85"/>
<circle cx="69.3" cy="267.5" r="1.3" fill="#161616" opacity=".85"/>
<circle cx="85.7" cy="274.7" r="1.1" fill="#161616" opacity=".85"/>
<circle cx="88.2" cy="272.7" r="0.6" fill="#161616" opacity=".85"/>
<circle cx="73.7" cy="266.8" r="1.6" fill="#161616" opacity=".85"/>
<circle cx="76.0" cy="271.8" r="0.9" fill="#161616" opacity=".85"/>
<circle cx="80.9" cy="275.7" r="1.0" fill="#161616" opacity=".85"/>
<circle cx="78.9" cy="265.6" r="1.0" fill="#161616" opacity=".85"/>
<circle cx="79.0" cy="279.4" r="1.5" fill="#161616" opacity=".85"/>
<circle cx="83.0" cy="263.9" r="1.0" fill="#161616" opacity=".85"/>
<circle cx="84.3" cy="276.3" r="1.1" fill="#161616" opacity=".85"/>
<circle cx="82.2" cy="270.3" r="0.7" fill="#161616" opacity=".85"/>
<circle cx="77.0" cy="260.5" r="0.8" fill="#161616" opacity=".85"/>
<circle cx="80.2" cy="265.1" r="1.4" fill="#161616" opacity=".85"/>
<circle cx="83.4" cy="264.2" r="1.5" fill="#161616" opacity=".85"/>
<circle cx="77.4" cy="271.0" r="1.2" fill="#161616" opacity=".85"/>
<circle cx="75.9" cy="267.7" r="1.0" fill="#161616" opacity=".85"/>
<circle cx="78.0" cy="271.5" r="0.9" fill="#161616" opacity=".85"/>
<circle cx="74.6" cy="273.4" r="1.4" fill="#161616" opacity=".85"/>
<circle cx="71.0" cy="275.3" r="1.5" fill="#161616" opacity=".85"/>
<circle cx="85.6" cy="266.0" r="1.3" fill="#161616" opacity=".85"/>
<circle cx="70.7" cy="267.6" r="1.0" fill="#161616" opacity=".85"/>
<circle cx="72.7" cy="265.4" r="1.2" fill="#161616" opacity=".85"/>
<circle cx="78.3" cy="272.1" r="0.7" fill="#161616" opacity=".85"/>
<circle cx="74.8" cy="274.7" r="1.4" fill="#161616" opacity=".85"/>
<circle cx="77.9" cy="265.2" r="1.6" fill="#161616" opacity=".85"/>
<circle cx="77.7" cy="277.1" r="0.7" fill="#161616" opacity=".85"/>
<circle cx="79.0" cy="262.1" r="1.7" fill="#161616" opacity=".85"/>
<circle cx="112.7" cy="264.8" r="1.3" fill="#161616" opacity=".85"/>
<circle cx="106.0" cy="262.2" r="0.8" fill="#161616" opacity=".85"/>
<circle cx="97.3" cy="268.5" r="0.8" fill="#161616" opacity=".85"/>
<circle cx="113.2" cy="268.4" r="0.9" fill="#161616" opacity=".85"/>
<circle cx="112.2" cy="269.6" r="0.7" fill="#161616" opacity=".85"/>
<circle cx="101.2" cy="261.9" r="1.3" fill="#161616" opacity=".85"/>
<circle cx="102.2" cy="265.8" r="0.7" fill="#161616" opacity=".85"/>
<circle cx="103.9" cy="263.1" r="1.2" fill="#161616" opacity=".85"/>
<circle cx="100.0" cy="276.1" r="0.8" fill="#161616" opacity=".85"/>
<circle cx="104.8" cy="274.1" r="1.1" fill="#161616" opacity=".85"/>
<circle cx="109.8" cy="267.0" r="1.1" fill="#161616" opacity=".85"/>
<circle cx="107.0" cy="265.0" r="0.7" fill="#161616" opacity=".85"/>
<circle cx="98.4" cy="266.0" r="1.3" fill="#161616" opacity=".85"/>
<circle cx="105.7" cy="263.6" r="0.9" fill="#161616" opacity=".85"/>
<circle cx="97.3" cy="267.8" r="0.8" fill="#161616" opacity=".85"/>
<circle cx="105.1" cy="276.6" r="1.4" fill="#161616" opacity=".85"/>
</svg>
  <div class="t b" style="left:12px;top:291px">Textures</div>
  <div class="abs" style="left:10px;top:308px;width:150px;height:58px;background:#404040;border:1px solid #2c2c2c"></div>
  <svg class="abs" style="left:10px;top:308px" width="144" height="58" viewBox="856 308 144 58">
<rect x="858.500" y="311" width="52" height="51" fill="#6b5d42"/><rect x="858.500" y="311" width="52" height="51" filter="url(#nA)" opacity=".4"/><rect x="858.500" y="311" width="52" height="51" filter="url(#nB)" opacity=".3"/><rect x="858.500" y="311" width="52" height="51" filter="url(#nF)" opacity=".3"/>
<rect x="913" y="311" width="51.500" height="52.500" fill="#4a6cb5"/><rect x="913" y="311" width="51.500" height="49.800" fill="#aa8b5d"/><rect x="913" y="311" width="51.500" height="49.800" filter="url(#nF)" opacity=".18"/>
</svg>
  <div class="abs" style="left:138px;top:372px;width:30px;height:12px;background:linear-gradient(#5a5a5a,#444);border:1px solid #222;border-radius:3px"></div>
  <div class="t" style="left:141px;top:371px;font-size:9px;color:#eee">✲ E</div>
  <div class="t b" style="left:12px;top:392px">Settings</div>
  <div class="t" style="left:12px;top:409px">Brush Size</div>
  <div class="t" style="left:12px;top:424px">Opacity</div>
  <div class="t" style="left:12px;top:439px">Target Strength</div>
  <div class="abs" style="left:113px;top:415px;width:50px;height:2px;background:#2d2d2d;box-shadow:0 1px 0 #424242"></div>
  <div class="abs" style="left:113px;top:430px;width:50px;height:2px;background:#2d2d2d;box-shadow:0 1px 0 #424242"></div>
  <div class="abs" style="left:113px;top:445px;width:50px;height:2px;background:#2d2d2d;box-shadow:0 1px 0 #424242"></div>
  <div class="abs" style="left:121px;top:412px;width:8px;height:8px;border-radius:4px;background:#686868;box-shadow:0 0 1px #222"></div>
  <div class="abs" style="left:150px;top:427px;width:8px;height:8px;border-radius:4px;background:#686868;box-shadow:0 0 1px #222"></div>
  <div class="sep" style="top:459px"></div>
  <div class="fold" style="left:2px;top:465px"></div>
  <svg class="abs" style="left:12px;top:461px" width="14" height="14" viewBox="0 0 14 14"><polygon points="1,4 7,1 13,4 7,7" fill="#b8f04a"/><polygon points="1,4 7,7 7,13 1,10" fill="#7fd02a"/><polygon points="7,7 13,4 13,10 7,13" fill="#58a81e"/></svg>
  <div class="chk" style="left:29px;top:464px"></div>
  <div class="t b" style="left:41px;top:462px">Terrain Collider</div>
  <div class="t" style="left:12px;top:477px">Material</div>
  <div class="fld" style="left:113px;top:476px;width:50px;height:14px">None (Physic Material)</div>
  <div class="t" style="left:12px;top:492px">Terrain Data</div>
  <div class="fld" style="left:113px;top:491.5px;width:50px;height:14px;padding-left:12px">New Terrain</div>
  <div class="abs" style="left:116px;top:494.5px;width:8px;height:8px;background:#c9c9c9;border-radius:2px"></div>
  <div class="t" style="left:12px;top:507px">Enable Tree Collider</div>
  <div class="chk" style="left:114px;top:508.5px"></div>
  <div class="sep" style="top:523px"></div>
  <div class="abs" style="left:18px;top:533px;width:150px;height:18px;background:linear-gradient(#515151,#3d3d3d);border:1px solid #262626;border-radius:4px"></div>
  <div class="t" style="left:73px;top:535px;font-size:11.500px;color:#c9c9c9">Add Component</div>
</div>
<!-- PROJECT -->
<div class="panel" style="left:0;top:519px;width:843px;height:154px">
  <div class="abs" style="left:0;top:0;width:843px;height:15px;background:#292929"></div>
  <div class="tab" style="left:0;top:0;width:73px;height:16px"></div>
  <div class="abs" style="left:0px;top:5px;width:5px;height:6px;background:#aaa"></div>
  <div class="t" style="left:9px;top:3px;font-size:10.500px;color:#c4c4c4">Project</div>
  <div class="abs" style="left:84px;top:3px;width:6px;height:8px;background:#c4c4c4;border-radius:1px"></div>
  <div class="t" style="left:95px;top:3px;font-size:10.500px;color:#b4b4b4">Console</div>
  <div class="abs" style="left:816px;top:8px;width:6px;height:5px;background:#b8b8b8;border-radius:1px"></div><div class="abs" style="left:817px;top:5px;width:4px;height:5px;border:1px solid #b8b8b8;border-bottom:0;border-radius:2px 2px 0 0"></div>
  <div class="t" style="left:827px;top:2px;font-size:10px;color:#bbb;letter-spacing:0">▾≡</div>
  <div class="tb" style="left:0;top:15px;width:843px;height:15px"></div>
  <div class="t" style="left:0;top:16px;font-size:9.5px;letter-spacing:.3px;color:#bdbdbd">Create <span style="font-size:7px;position:relative;top:-1px">▾</span></div>
  <div class="srch" style="left:518px;top:17px;width:253px;height:12px"></div>
  <div class="t" style="left:523px;top:16px;font-size:9px;color:#6e6e6e">Q</div>
  <div class="t" style="left:787px;top:16px;font-size:9px;color:#aaa">♣</div>
  <div class="t" style="left:804px;top:16px;font-size:9px;color:#aaa">◆</div>
  <div class="t" style="left:822px;top:16px;font-size:10px;color:#777">★</div>
  <!-- tree -->
  <div class="abs" style="left:0;top:28.8px;width:269px;height:125.2px;overflow:hidden">
    <div class="fi" style="left:50px;top:0px"></div><div class="t" style="left:64px;top:-4px">Animator</div>
    <div class="fi" style="left:50px;top:12px"></div><div class="t" style="left:64px;top:9px">Materials</div>
    <div class="fi" style="left:50px;top:26px"></div><div class="t" style="left:64px;top:23px">Models</div>
    <div class="fi" style="left:50px;top:39px"></div><div class="t" style="left:64px;top:36px">Prefabs</div>
    <div class="fi" style="left:50px;top:53px"></div><div class="t" style="left:64px;top:50px">Scripts</div>
    <div class="fi" style="left:50px;top:66px"></div><div class="t" style="left:64px;top:63px">Textures</div>
    <div class="foldr" style="left:18px;top:80px"></div><div class="fi" style="left:26px;top:80px"></div><div class="t" style="left:41px;top:77px">CrossPlatformInput</div>
    <div class="fold" style="left:17px;top:95px"></div><div class="fi" style="left:26px;top:94px"></div><div class="t" style="left:41px;top:91px">Environment</div>
    <div class="fold" style="left:29px;top:108px"></div><div class="fi" style="left:38px;top:107px"></div><div class="t" style="left:53px;top:104px">SpeedTree</div>
    <div class="foldr" style="left:42px;top:120px"></div><div class="fi" style="left:50px;top:120px"></div><div class="t" style="left:64px;top:117px">Broadleaf</div>
  </div>
  <!-- scrollbar -->
  <div class="abs" style="left:269px;top:30px;width:11px;height:124px;background:#2f2f2f;border-left:1px solid #262626;border-right:1px solid #1c1c1c"></div>
  <div class="abs" style="left:271px;top:34px;width:0;height:0;border-left:3px solid transparent;border-right:3px solid transparent;border-bottom:4px solid #6a6a6a"></div>
  <div class="abs" style="left:270px;top:107px;width:9px;height:60px;background:#4e4e4e;border-radius:4px"></div>
  <!-- right -->
  <div class="abs" style="left:281px;top:30px;width:562px;height:16px;background:#3b3b3b;border-bottom:1px solid #2a2a2a"></div>
  <div class="t" style="left:286px;top:32px;font-size:10px;letter-spacing:.78px">Assets <span style="font-size:6px;position:relative;top:-1px;color:#999">▶</span> Standard Assets <span style="font-size:6px;position:relative;top:-1px;color:#999">▶</span> Environment <span style="font-size:6px;position:relative;top:-1px;color:#999">▶</span> TerrainAssets <span style="font-size:6px;position:relative;top:-1px;color:#999">▶</span> <b style="color:#d0d0d0;font-size:10.5px;letter-spacing:.58px">SurfaceTextures</b></div>
  <svg class="abs" style="left:281px;top:47px" width="562" height="107" viewBox="281 566 562 107">
<defs>
<filter id="nA" x="0" y="0" width="100%" height="100%"><feTurbulence type="fractalNoise" baseFrequency="0.35" numOctaves="3" seed="7"/><feColorMatrix type="matrix" values="0 0 0 0 0  0 0 0 0 0  0 0 0 0 0  2.2 0 0 0 -0.85"/></filter>
<filter id="nB" x="0" y="0" width="100%" height="100%"><feTurbulence type="fractalNoise" baseFrequency="0.35" numOctaves="3" seed="11"/><feColorMatrix type="matrix" values="0 0 0 0 1  0 0 0 0 1  0 0 0 0 0.9  0 2.2 0 0 -0.9"/></filter>
<filter id="nF" x="0" y="0" width="100%" height="100%"><feTurbulence type="fractalNoise" baseFrequency="0.8" numOctaves="2" seed="2"/><feColorMatrix type="matrix" values="0 0 0 0 0  0 0 0 0 0  0 0 0 0 0  1.6 0 0 0 -0.6"/></filter>
<filter id="nN" x="0" y="0" width="100%" height="100%"><feTurbulence type="turbulence" baseFrequency="0.12 0.2" numOctaves="2" seed="4"/><feColorMatrix type="matrix" values="0 0 0 0 0.95  0 0 0 0 0.8  0 0 0 0 1  2.5 0 0 0 -0.35"/></filter>
</defs>
<rect x="297.5" y="575.4" width="43.500" height="43.5" fill="#6a6850"/><rect x="297.5" y="575.4" width="43.500" height="43.5" filter="url(#nA)" opacity="0.55"/><rect x="297.5" y="575.4" width="43.500" height="43.5" filter="url(#nB)" opacity="0.35"/><rect x="297.5" y="575.4" width="43.500" height="43.5" filter="url(#nF)" opacity="0.25"/>
<rect x="357.9" y="575.4" width="43.500" height="43.5" fill="#8481f8"/><rect x="357.9" y="575.4" width="43.500" height="43.5" filter="url(#nF)" opacity="0.06"/>
<rect x="418.3" y="575.4" width="43.500" height="43.5" fill="#58691f"/><rect x="418.3" y="575.4" width="43.500" height="43.5" filter="url(#nA)" opacity="0.35"/><rect x="418.3" y="575.4" width="43.500" height="43.5" filter="url(#nB)" opacity="0.12"/><rect x="418.3" y="575.4" width="43.500" height="43.5" filter="url(#nF)" opacity="0.3"/>
<rect x="478.7" y="575.4" width="43.500" height="43.5" fill="#8481f8"/><rect x="478.7" y="575.4" width="43.500" height="43.5" filter="url(#nF)" opacity="0.06"/>
<rect x="539.1" y="575.4" width="43.500" height="43.5" fill="#746a4e"/><rect x="539.1" y="575.4" width="43.500" height="43.5" filter="url(#nA)" opacity="0.35"/><rect x="539.1" y="575.4" width="43.500" height="43.5" filter="url(#nB)" opacity="0.2"/><rect x="539.1" y="575.4" width="43.500" height="43.5" filter="url(#nF)" opacity="0.3"/>
<rect x="599.5" y="575.4" width="43.500" height="43.5" fill="#a68d72"/><rect x="599.5" y="575.4" width="43.500" height="43.5" filter="url(#nA)" opacity="0.2"/><rect x="599.5" y="575.4" width="43.500" height="43.5" filter="url(#nB)" opacity="0.12"/><rect x="599.5" y="575.4" width="43.500" height="43.5" filter="url(#nF)" opacity="0.3"/>
<rect x="659.9" y="575.4" width="43.500" height="43.5" fill="#8481f8"/><rect x="659.9" y="575.4" width="43.500" height="43.5" filter="url(#nF)" opacity="0.06"/>
<rect x="720.3" y="575.4" width="43.500" height="43.5" fill="#94894f"/><rect x="720.3" y="575.4" width="43.500" height="43.5" filter="url(#nA)" opacity="0.3"/><rect x="720.3" y="575.4" width="43.500" height="43.5" filter="url(#nB)" opacity="0.25"/><rect x="720.3" y="575.4" width="43.500" height="43.5" filter="url(#nF)" opacity="0.3"/>
<rect x="780.7" y="575.4" width="43.500" height="43.5" fill="#8481f8"/><rect x="780.7" y="575.4" width="43.500" height="43.5" filter="url(#nF)" opacity="0.06"/>
<rect x="297.5" y="646.8" width="43.500" height="27.0" fill="#4a3a24"/><rect x="297.5" y="646.8" width="43.500" height="27.0" filter="url(#nA)" opacity="0.6"/><rect x="297.5" y="646.8" width="43.500" height="27.0" filter="url(#nB)" opacity="0.2"/><rect x="297.5" y="646.8" width="43.500" height="27.0" filter="url(#nF)" opacity="0.3"/>
<rect x="357.9" y="646.8" width="43.500" height="27.0" fill="#8a78e4"/><rect x="357.9" y="646.8" width="43.500" height="27.0" filter="url(#nF)" opacity="0.1"/><rect x="357.9" y="646.8" width="43.500" height="27.0" filter="url(#nN)" opacity=".55"/>
<rect x="418.3" y="646.8" width="43.500" height="27.0" fill="#c09f70"/><rect x="418.3" y="646.8" width="43.500" height="27.0" filter="url(#nA)" opacity="0.08"/><rect x="418.3" y="646.8" width="43.500" height="27.0" filter="url(#nB)" opacity="0.05"/><rect x="418.3" y="646.8" width="43.500" height="27.0" filter="url(#nF)" opacity="0.2"/>
</svg>
<div class="lbl" style="left:289.2px;top:102px">CliffAlbed..</div>
<div class="lbl" style="left:349.6px;top:102px">CliffAlbed..</div>
<div class="lbl" style="left:410.1px;top:102px">GrassHill..</div>
<div class="lbl" style="left:470.4px;top:102px">GrassHill..</div>
<div class="lbl" style="left:530.9px;top:102px">GrassRoc..</div>
<div class="lbl" style="left:591.2px;top:102px">ground1</div>
<div class="lbl" style="left:651.6px;top:102px">ground1_..</div>
<div class="lbl" style="left:712.0px;top:102px">ground2</div>
<div class="lbl" style="left:772.5px;top:102px">ground2N..</div>
</div>
</body></html>
